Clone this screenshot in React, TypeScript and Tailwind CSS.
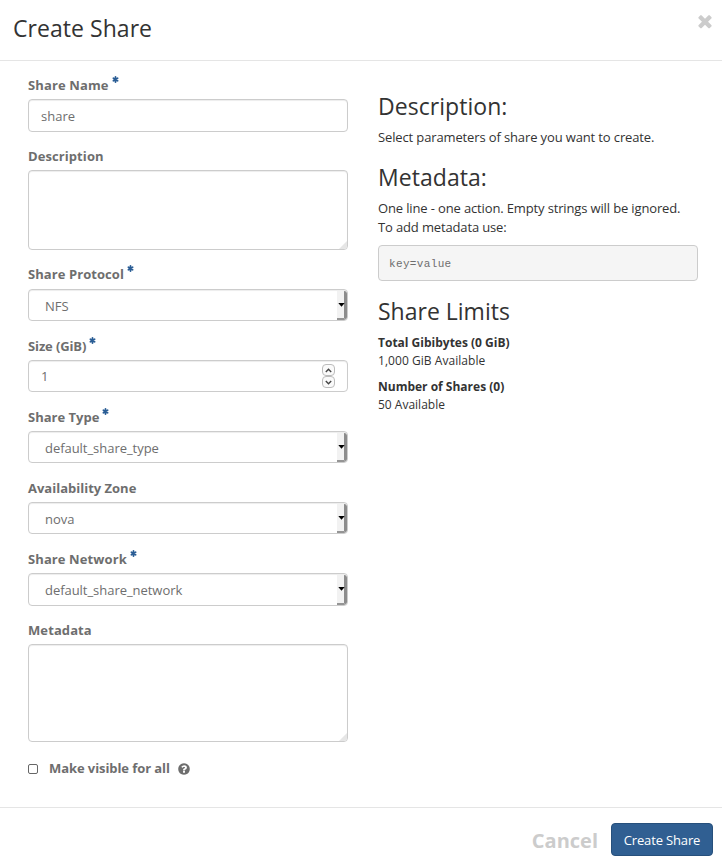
import type { ReactNode } from "react";

function Asterisk() {
  return (
    <svg className="ml-[3px] h-[7px] w-[7px] shrink-0" viewBox="0 0 7 7" stroke="#2a5d95" strokeWidth="1.8" strokeLinecap="round">
      <path d="M3.5 1V6M1.4 2.3L5.6 4.7M5.6 2.3L1.4 4.7" />
    </svg>
  );
}

function Field({ label, required, className, tracking = "", children }: { label: string; required?: boolean; className: string; tracking?: string; children: ReactNode }) {
  return (
    <div className={className}>
      <label className="flex h-[23px] font-bold leading-[19px]">
        <span className={tracking}>{label}</span>
        {required && <Asterisk />}
      </label>
      {children}
    </div>
  );
}

const box = "rounded-[4px] border border-[#ccc] bg-white shadow-[inset_0_1px_1px_rgba(0,0,0,0.075)]";

function Select({ value, height }: { value: string; height: string }) {
  return (
    <div className={`flex items-center overflow-hidden pl-4 ${box} ${height}`}>
      <span className="flex-1 pt-[2px] tracking-[-0.04px]">{value}</span>
      <span className="mt-px flex h-[calc(100%-1px)] w-[10px] items-center justify-center rounded-r-[3px] border-b-2 border-r-[3px] border-b-[#959595] border-r-[#8c8c8c] bg-[#f2f2f2]">
        <svg className="relative left-px h-[4px] w-[7px] shrink-0" viewBox="0 0 7 4">
          <path d="M0.3 0H6.7L3.5 3.8Z" fill="#000" />
        </svg>
      </span>
    </div>
  );
}

function TextArea({ height }: { height: string }) {
  return (
    <div className={`flex items-end justify-end ${box} ${height}`}>
      <svg className="h-[9px] w-[9px]" viewBox="0 0 9 9">
        <path d="M9 1V6Q9 9 6 9H1Z" fill="#e6e6e6" />
      </svg>
    </div>
  );
}

function Stepper({ d }: { d: string }) {
  return (
    <span className="flex h-3 w-[13px] items-center justify-center rounded-[4px] border border-[#bcbcbc] bg-[#fafafa]">
      <svg className="h-[5px] w-[7px]" viewBox="0 0 7 5" fill="none" stroke="#444" strokeWidth="1.4">
        <path d={d} />
      </svg>
    </span>
  );
}

export default function App() {
  return (
    <div className="flex h-[866px] w-[722px] flex-col bg-white font-['Open_Sans','Noto_Sans',sans-serif] text-[13px] leading-[19px] text-[#6e6e6e]">
      <header className="flex h-[61px] shrink-0 items-start justify-between border-b border-[#e5e5e5] pl-[13px] pr-[7px]">
        <h1 className="pt-[12px] text-[23px] leading-[33px] tracking-[0.05px] text-[#333]">Create Share</h1>
        <svg className="mt-[11px] h-[20px] w-[20px]" viewBox="0 0 1792 1792" fill="#ccc">
          <path d="M1490 1322q0 40-28 68l-136 136q-28 28-68 28t-68-28l-294-294-294 294q-28 28-68 28t-68-28l-136-136q-28-28-28-68t28-68l294-294-294-294q-28-28-28-68t28-68l136-136q28-28 68-28t68 28l294 294 294-294q28-28 68-28t68 28l136 136q28 28 28 68t-28 68l-294 294 294 294q28 28 28 68z" />
        </svg>
      </header>
      <main className="flex h-[746px] shrink-0 gap-[30px] pl-7 pt-[15px]">
        <form className="w-[320px]">
          <Field label="Share Name" required tracking="tracking-[0.13px]" className="mb-[15px]">
            <div className={`flex h-[33px] items-center pl-3 pt-px ${box}`}>share</div>
          </Field>
          <Field label="Description" tracking="tracking-[0.08px]" className="mb-[15px]">
            <TextArea height="h-[80px]" />
          </Field>
          <Field label="Share Protocol" required tracking="tracking-[0.07px]" className="mb-4 [&>label]:h-6">
            <Select value="NFS" height="h-8" />
          </Field>
          <Field label="Size (GiB)" required tracking="tracking-[-0.12px]" className="mb-4">
            <div className={`flex h-8 items-center justify-between pl-3 pr-3 ${box}`}>
              <span className="pt-px">1</span>
              <span className="flex flex-col">
                <Stepper d="M0.8 4L3.5 1.3L6.2 4" />
                <Stepper d="M0.8 1L3.5 3.7L6.2 1" />
              </span>
            </div>
          </Field>
          <Field label="Share Type" required className="mb-4">
            <Select value="default_share_type" height="h-8" />
          </Field>
          <Field label="Availability Zone" className="mb-4">
            <Select value="nova" height="h-8" />
          </Field>
          <Field label="Share Network" required tracking="tracking-[0.1px]" className="mb-[15px]">
            <Select value="default_share_network" height="h-[33px]" />
          </Field>
          <Field label="Metadata" tracking="tracking-[0.1px]" className="mb-[17px]">
            <TextArea height="h-[98px]" />
          </Field>
          <div className="flex h-[19px] items-center font-bold">
            <span className="h-[10px] w-[10px] rounded-[2px] border border-[#666] bg-white" />
            <span className="ml-[11px] tracking-[-0.08px]">Make visible for all</span>
            <svg className="ml-[8px] h-[12px] w-[12px]" viewBox="100 100 1592 1592" fill="#6e6e6e">
              <path d="M1024 1376v-192q0-14-9-23t-23-9h-192q-14 0-23 9t-9 23v192q0 14 9 23t23 9h192q14 0 23-9t9-23zm256-672q0-88-55.5-163t-138.5-116-170-41q-243 0-371 213-15 24 8 42l132 100q7 6 19 6 16 0 25-12 53-68 86-92 34-24 86-24 48 0 85.5 26t37.5 59q0 38-20 61t-68 45q-63 28-115.5 86.5t-52.5 125.5v36q0 14 9 23t23 9h192q14 0 23-9t9-23q0-19 21.5-49.5t54.5-49.5q32-18 49-28.5t46-35 44.5-48 28-60.5 12.5-81zm384 192q0 209-103 385.5t-279.5 279.5-385.5 103-385.5-103-279.5-279.5-103-385.5 103-385.5 279.5-279.5 385.5-103 385.5 103 279.5 279.5 103 385.5z" />
            </svg>
          </div>
        </form>
        <section className="w-[320px] pt-[18px] text-[#333]">
          <h2 className="text-[23px] leading-[25px] tracking-[0.05px]">Description:</h2>
          <p className="mt-[9px] tracking-[-0.13px]">Select parameters of share you want to create.</p>
          <h2 className="mt-[18px] text-[23px] leading-[25px] tracking-[0.05px]">Metadata:</h2>
          <p className="mt-[9px] whitespace-nowrap tracking-[-0.14px]">
            One line - one action. Empty strings will be ignored.
            <br />
            To add metadata use:
          </p>
          <pre className="mt-2 h-9 rounded-[4px] border border-[#ccc] bg-[#f5f5f5] pl-[10px] pt-[9px] font-['Liberation_Mono',monospace] text-[11px] leading-[18px] tracking-[0.35px] text-[#6e6e6e]">key=value</pre>
          <h2 className="mt-[18px] text-[23px] leading-[25px]">Share Limits</h2>
          <div className="mt-[10px] text-[12px] leading-[18px]">
            <p className="font-bold">Total Gibibytes (0 GiB)</p>
            <p className="tracking-[0.05px]">1,000 GiB Available</p>
            <p className="mt-2 font-bold">Number of Shares (0)</p>
            <p>50 Available</p>
          </div>
        </section>
      </main>
      <footer className="flex flex-1 items-start justify-end gap-[13px] border-t border-[#e5e5e5] pr-[9px] pt-[15px]">
        <span className="pt-px text-[20px] font-bold leading-[34px] text-[#ccc]">Cancel</span>
        <button className="h-[33px] w-[102px] whitespace-nowrap rounded-[4px] border border-[#27507c] bg-[#305f92] pt-px text-center text-[13px] tracking-[-0.15px] text-white">Create Share</button>
      </footer>
    </div>
  );
}
